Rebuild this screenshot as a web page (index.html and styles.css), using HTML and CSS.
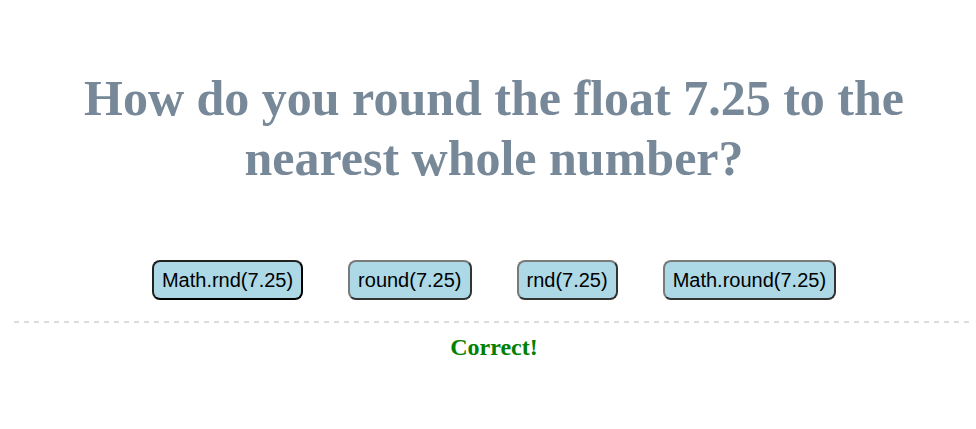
FILE: index.html
```html
<!DOCTYPE html>
<html>
<head>
<meta charset="utf-8">
<title>Quiz</title>
<link rel="stylesheet" href="styles.css">
</head>
<body>
<div class="quiz">
  <h1 class="question">How do you round the float 7.25 to the nearest whole number?</h1>
  <div class="options">
    <button class="option selected">Math.rnd(7.25)</button>
    <button class="option">round(7.25)</button>
    <button class="option">rnd(7.25)</button>
    <button class="option">Math.round(7.25)</button>
  </div>
  <div class="divider"></div>
  <p class="result">Correct!</p>
</div>
</body>
</html>
```
FILE: styles.css
```css
html, body {
  margin: 0;
  padding: 0;
  background: #ffffff;
}

.quiz {
  margin: 0 2px 0 14px;
  padding-top: 68px;
  text-align: center;
}

.question {
  margin: 0;
  padding: 0 40px;
  font-family: "Liberation Serif", "Times New Roman", serif;
  font-weight: bold;
  font-size: 50px;
  line-height: 60px;
  color: #778899;
}

.options {
  margin-top: 72px;
  padding-bottom: 21px;
  display: flex;
  justify-content: center;
  gap: 45px;
}

.option {
  font-family: "Liberation Sans", Arial, sans-serif;
  font-size: 20px;
  line-height: 23px;
  color: #000;
  background: #add8e6;
  padding: 6.5px 8px;
  border: 2px solid;
  border-color: #7a7a7a #333 #333 #7a7a7a;
  border-radius: 8px;
  cursor: pointer;
}

.option.selected {
  border-color: #222 #000 #000 #222;
}

.divider {
  height: 2px;
  background: repeating-linear-gradient(to right, #dcdcdc 0 5px, transparent 5px 10px);
}

.result {
  margin: 11px 0 0;
  font-family: "Liberation Serif", "Times New Roman", serif;
  font-weight: bold;
  font-size: 24px;
  color: #008000;
}
```
